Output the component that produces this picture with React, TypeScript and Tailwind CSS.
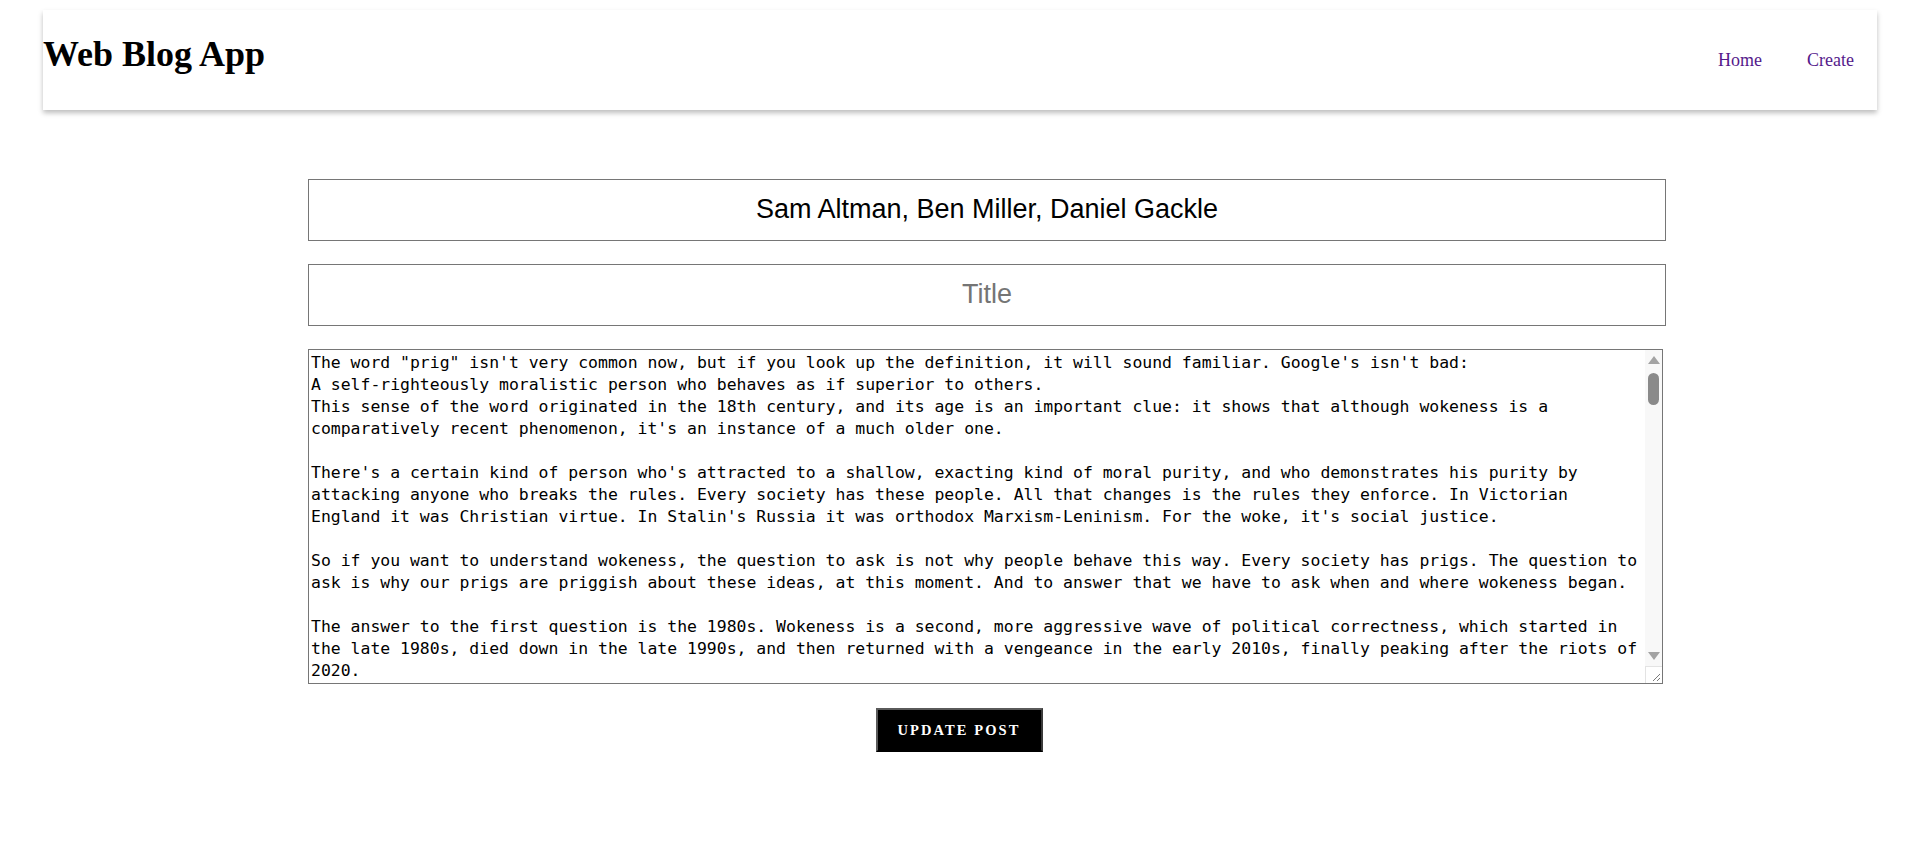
import React from "react";

const lines: string[] = [
  `The word "prig" isn't very common now, but if you look up the definition, it will sound familiar. Google's isn't bad:`,
  `A self-righteously moralistic person who behaves as if superior to others.`,
  `This sense of the word originated in the 18th century, and its age is an important clue: it shows that although wokeness is a`,
  `comparatively recent phenomenon, it's an instance of a much older one.`,
  ``,
  `There's a certain kind of person who's attracted to a shallow, exacting kind of moral purity, and who demonstrates his purity by`,
  `attacking anyone who breaks the rules. Every society has these people. All that changes is the rules they enforce. In Victorian`,
  `England it was Christian virtue. In Stalin's Russia it was orthodox Marxism-Leninism. For the woke, it's social justice.`,
  ``,
  `So if you want to understand wokeness, the question to ask is not why people behave this way. Every society has prigs. The question to`,
  `ask is why our prigs are priggish about these ideas, at this moment. And to answer that we have to ask when and where wokeness began.`,
  ``,
  `The answer to the first question is the 1980s. Wokeness is a second, more aggressive wave of political correctness, which started in`,
  `the late 1980s, died down in the late 1990s, and then returned with a vengeance in the early 2010s, finally peaking after the riots of`,
  `2020.`,
];

export default function App() {
  return (
    <div className="min-h-[867px] bg-white pt-[10px]">
      <header className="ml-[43px] flex h-[100px] w-[1834px] items-baseline justify-between bg-white pr-[23px] pt-[26px] shadow-[0_3px_5px_rgba(0,0,0,0.26)]">
        <h1 className="font-['Liberation_Serif',serif] text-[36px] font-bold leading-[36px] text-black">
          Web Blog App
        </h1>
        <nav className="flex items-baseline gap-[45px] font-['Liberation_Serif',serif] text-[18px] text-[#551a8b]">
          <a href="#" className="no-underline">Home</a>
          <a href="#" className="no-underline">Create</a>
        </nav>
      </header>

      <main className="mt-[69px] flex flex-col items-start">
        <input
          readOnly
          defaultValue="Sam Altman, Ben Miller, Daniel Gackle"
          className="ml-[308px] h-[62px] w-[1358px] border border-[#767676] bg-white pb-[2px] text-center font-['Liberation_Sans',Arial,sans-serif] text-[27px] text-black outline-none"
        />
        <input
          readOnly
          placeholder="Title"
          className="ml-[308px] mt-[23px] h-[62px] w-[1358px] border border-[#767676] bg-white pb-[2px] text-center font-['Liberation_Sans',Arial,sans-serif] text-[27px] text-black outline-none placeholder:text-[#757575]"
        />
        <div className="ml-[308px] mt-[23px] flex h-[335px] w-[1355px] border border-[#767676] bg-white">
          <div className="flex-1 overflow-hidden whitespace-pre px-[2px] pt-[2px] font-['DejaVu_Sans_Mono',monospace] text-[16.45px] leading-[22px] text-black">
            {lines.map((l, i) => (
              <div key={i} className="h-[22px]">{l}</div>
            ))}
          </div>
          <div className="flex w-[17px] flex-col">
            <div className="flex flex-1 flex-col bg-[#f8f8f8]">
              <div className="flex h-[17px] items-center justify-center pt-[2px]">
                <svg width="12" height="8" viewBox="0 0 12 8">
                  <polygon points="6,0 12,8 0,8" fill="#a3a3a3" />
                </svg>
              </div>
              <div className="mx-auto mt-[6px] h-[32px] w-[11px] rounded-full bg-[#8a8a8a]" />
              <div className="flex-1" />
              <div className="flex h-[17px] items-center justify-center pb-[4px]">
                <svg width="12" height="8" viewBox="0 0 12 8">
                  <polygon points="0,0 12,0 6,8" fill="#a3a3a3" />
                </svg>
              </div>
            </div>
            <div className="flex h-[17px] items-end justify-end border-l border-t border-[#e3e3e3] bg-white pb-[1px] pr-[1px]">
              <svg width="10" height="10" viewBox="0 0 10 10">
                <line x1="9" y1="2" x2="2" y2="9" stroke="#7a7a7a" strokeWidth="1" />
                <line x1="9" y1="6" x2="6" y2="9" stroke="#7a7a7a" strokeWidth="1" />
              </svg>
            </div>
          </div>
        </div>
        <button className="mt-[24px] flex h-[44px] w-[167px] items-center justify-center self-center border-2 border-[#5a5a5a] border-b-black border-r-[#3a3a3a] bg-black font-['Liberation_Serif',serif] text-[14.5px] font-bold uppercase leading-none tracking-[2.1px] text-white">
          Update Post
        </button>
      </main>
    </div>
  );
}
